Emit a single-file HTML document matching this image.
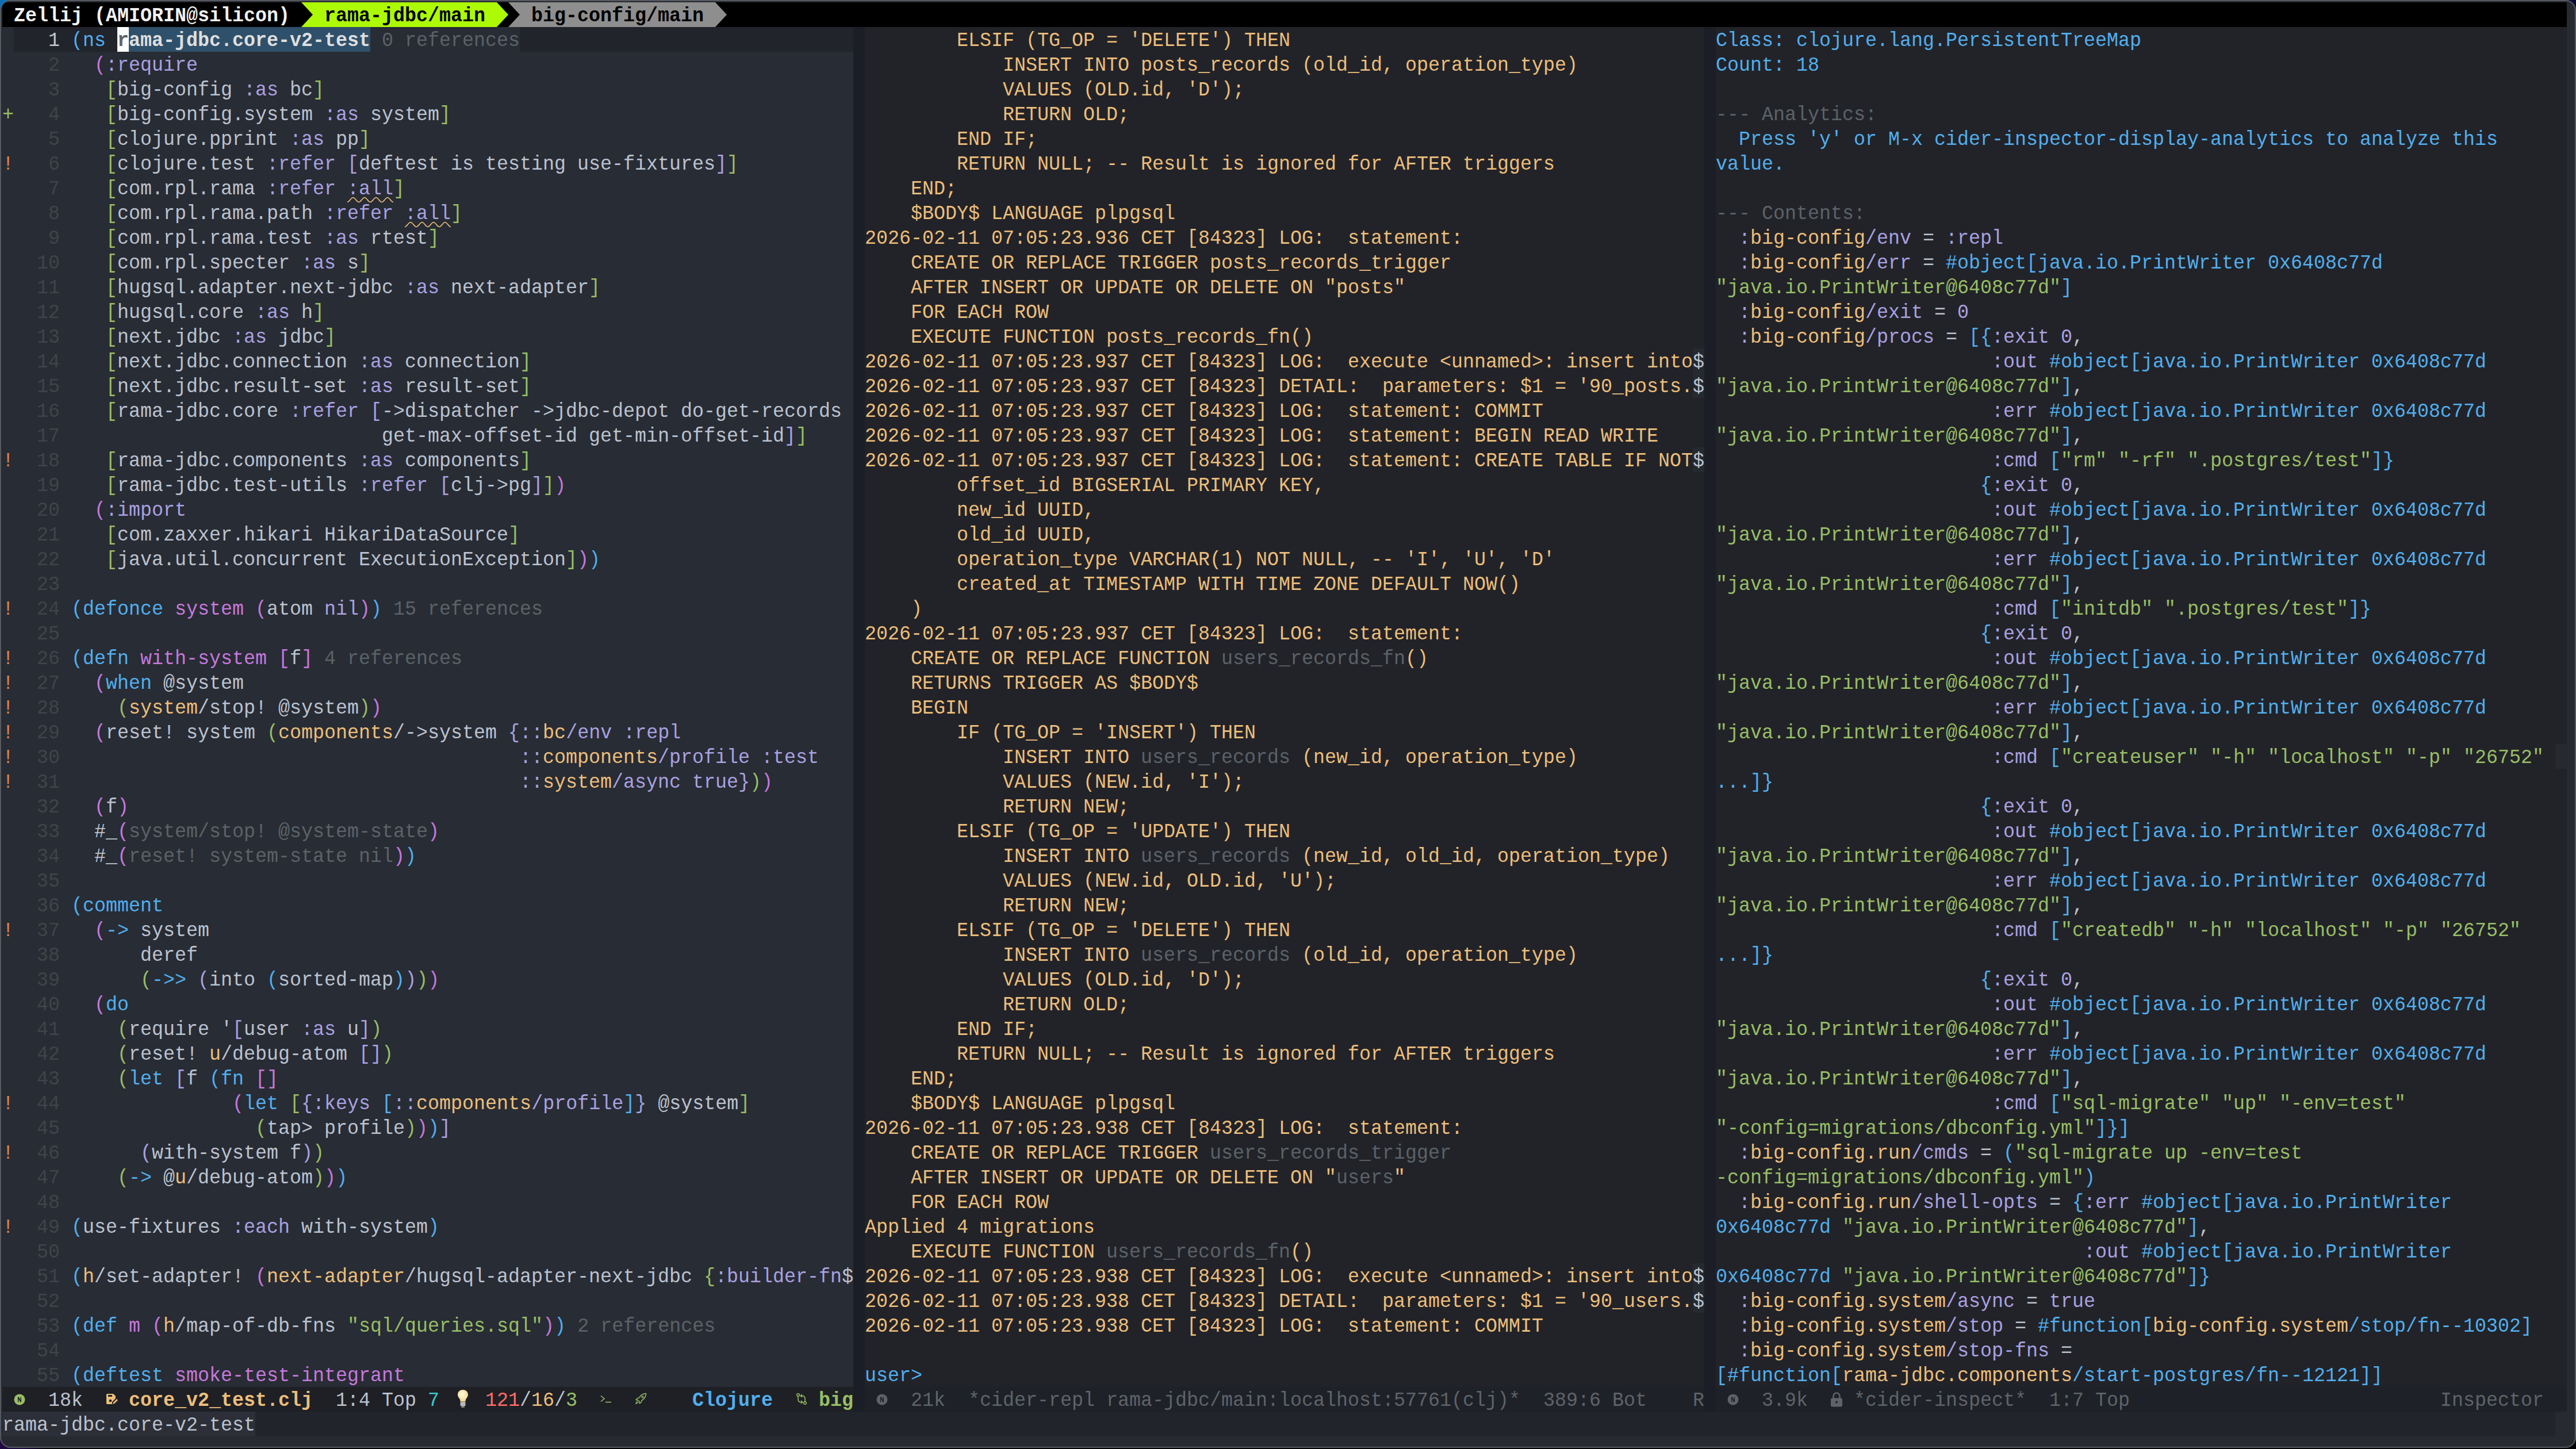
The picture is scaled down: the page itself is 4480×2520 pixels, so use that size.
<!DOCTYPE html>
<html><head><meta charset="utf-8"><title>Emacs</title><style>
html,body{margin:0;padding:0;width:4480px;height:2520px;overflow:hidden;background:#000;}
#scr{position:absolute;left:0;top:0;width:4480px;height:2520px;overflow:hidden;
  background:radial-gradient(circle at 0 0,#0a70bb 0,#0a70bb 30px,transparent 60px),radial-gradient(circle at 100% 0,#0b0a35 0,#0b0a35 40px,transparent 80px),radial-gradient(circle at 0 100%,#1c0a40 0,#1c0a40 40px,transparent 80px),#020205;}
#win{position:absolute;left:0;top:0;width:4476px;height:2514px;border:2px solid #56595f;border-radius:18px;background:#282a32;overflow:hidden;}
.q{position:absolute;}
.t{position:absolute;white-space:pre;font-family:"Liberation Mono",monospace;font-size:33.33px;line-height:43px;height:43px;transform:scaleY(1.078);transform-origin:0 30.4px;}
.b{font-weight:bold;}
</style></head>
<body><div id="scr"><div id="win">
<div style="position:absolute;left:-2px;top:-2px;width:4480px;height:2520px;">
<div class="q" style="left:4px;top:47px;width:1480px;height:2365px;background:#282c34;"></div><div class="q" style="left:24px;top:47px;width:1460px;height:43px;background:#21242b;"></div><div class="q" style="left:644px;top:47px;width:260px;height:43px;background:#282c34;"></div><div class="q" style="left:224px;top:47px;width:420px;height:43px;background:#2f506a;"></div><div class="q" style="left:204px;top:47px;width:20px;height:43px;background:#fcfcfc;"></div><div class="q" style="left:1484px;top:47px;width:20px;height:2408px;background:#1b1e26;"></div><div class="q" style="left:2964px;top:47px;width:20px;height:2408px;background:#1b1e26;"></div><div class="q" style="left:1504px;top:47px;width:1460px;height:2365px;background:#222328;"></div><div class="q" style="left:2984px;top:47px;width:1480px;height:2365px;background:#222328;"></div><div class="q" style="left:4px;top:2412px;width:1480px;height:43px;background:#1e2025;"></div><div class="q" style="left:1504px;top:2412px;width:1460px;height:43px;background:#1e2127;"></div><div class="q" style="left:2984px;top:2412px;width:1480px;height:43px;background:#1e2127;"></div><div class="q" style="left:4px;top:2455px;width:4440px;height:43px;background:#21242b;"></div><div class="q" style="left:4px;top:2455px;width:440px;height:43px;background:#2c2f37;"></div><div class="q" style="left:4px;top:4px;width:4460px;height:43px;background:#000000;"></div><div class="q" style="left:2944px;top:606px;width:20px;height:86px;background:#26292f;"></div><div class="q" style="left:2944px;top:2197px;width:20px;height:86px;background:#26292f;"></div><div class="q" style="left:2944px;top:778px;width:20px;height:43px;background:#26292f;"></div><div class="q" style="left:4444px;top:1294px;width:20px;height:43px;background:#27292f;"></div><div class="q" style="left:524px;top:4px;width:340px;height:43px;background:#adfa06;"></div><div class="q" style="left:884px;top:4px;width:360px;height:43px;background:#8e8e8e;"></div><div class="t b" style="left:24px;top:7px"><span style="color:#f0f0f0">Zellij (AMIORIN@silicon)</span></div><div class="t b" style="left:564px;top:7px"><span style="color:#000000">rama-jdbc/main</span></div><div class="t b" style="left:924px;top:7px"><span style="color:#000000">big-config/main</span></div><svg class="q" style="left:524px;top:4px" width="20" height="43" viewBox="0 0 20 43"><rect width="20" height="43" fill="#adfa06"/><path d="M0 0 L20 21.5 L0 43 Z" fill="#000000"/></svg><svg class="q" style="left:864px;top:4px" width="20" height="43" viewBox="0 0 20 43"><rect width="20" height="43" fill="#000000"/><path d="M0 0 L20 21.5 L0 43 Z" fill="#adfa06"/></svg><svg class="q" style="left:884px;top:4px" width="20" height="43" viewBox="0 0 20 43"><rect width="20" height="43" fill="#8e8e8e"/><path d="M0 0 L20 21.5 L0 43 Z" fill="#000000"/></svg><svg class="q" style="left:1244px;top:4px" width="20" height="43" viewBox="0 0 20 43"><rect width="20" height="43" fill="#000000"/><path d="M0 0 L20 21.5 L0 43 Z" fill="#8e8e8e"/></svg><div class="t" style="left:84px;top:50px"><span style="color:#c4c7cd">1</span></div><div class="t" style="left:124px;top:50px"><span style="color:#51afef">(ns </span><span style="color:#dfdfdf;font-weight:bold">rama-jdbc.core-v2-test</span><span style="color:#5b6268"> 0 references</span></div><div class="t" style="left:84px;top:93px"><span style="color:#3f444a">2</span></div><div class="t" style="left:124px;top:93px"><span style="color:#bbc2cf">  </span><span style="color:#c678dd">(</span><span style="color:#a9a1e1">:require</span></div><div class="t" style="left:84px;top:136px"><span style="color:#3f444a">3</span></div><div class="t" style="left:124px;top:136px"><span style="color:#bbc2cf">   </span><span style="color:#98be65">[</span><span style="color:#bbc2cf">big-config </span><span style="color:#a9a1e1">:as </span><span style="color:#bbc2cf">bc</span><span style="color:#98be65">]</span></div><div class="t" style="left:84px;top:179px"><span style="color:#3f444a">4</span></div><div class="t" style="left:124px;top:179px"><span style="color:#bbc2cf">   </span><span style="color:#98be65">[</span><span style="color:#bbc2cf">big-config.system </span><span style="color:#a9a1e1">:as </span><span style="color:#bbc2cf">system</span><span style="color:#98be65">]</span></div><div class="t" style="left:4px;top:179px"><span style="color:#98be65">+</span></div><div class="t" style="left:84px;top:222px"><span style="color:#3f444a">5</span></div><div class="t" style="left:124px;top:222px"><span style="color:#bbc2cf">   </span><span style="color:#98be65">[</span><span style="color:#bbc2cf">clojure.pprint </span><span style="color:#a9a1e1">:as </span><span style="color:#bbc2cf">pp</span><span style="color:#98be65">]</span></div><div class="t" style="left:84px;top:265px"><span style="color:#3f444a">6</span></div><div class="t" style="left:124px;top:265px"><span style="color:#bbc2cf">   </span><span style="color:#98be65">[</span><span style="color:#bbc2cf">clojure.test </span><span style="color:#a9a1e1">:refer </span><span style="color:#a9a1e1">[</span><span style="color:#bbc2cf">deftest is testing use-fixtures</span><span style="color:#a9a1e1">]</span><span style="color:#98be65">]</span></div><div class="t" style="left:4px;top:265px"><span style="color:#da8548">!</span></div><div class="t" style="left:84px;top:308px"><span style="color:#3f444a">7</span></div><div class="t" style="left:124px;top:308px"><span style="color:#bbc2cf">   </span><span style="color:#98be65">[</span><span style="color:#bbc2cf">com.rpl.rama </span><span style="color:#a9a1e1">:refer :all</span><span style="color:#98be65">]</span></div><div class="t" style="left:84px;top:351px"><span style="color:#3f444a">8</span></div><div class="t" style="left:124px;top:351px"><span style="color:#bbc2cf">   </span><span style="color:#98be65">[</span><span style="color:#bbc2cf">com.rpl.rama.path </span><span style="color:#a9a1e1">:refer :all</span><span style="color:#98be65">]</span></div><div class="t" style="left:84px;top:394px"><span style="color:#3f444a">9</span></div><div class="t" style="left:124px;top:394px"><span style="color:#bbc2cf">   </span><span style="color:#98be65">[</span><span style="color:#bbc2cf">com.rpl.rama.test </span><span style="color:#a9a1e1">:as </span><span style="color:#bbc2cf">rtest</span><span style="color:#98be65">]</span></div><div class="t" style="left:64px;top:437px"><span style="color:#3f444a">10</span></div><div class="t" style="left:124px;top:437px"><span style="color:#bbc2cf">   </span><span style="color:#98be65">[</span><span style="color:#bbc2cf">com.rpl.specter </span><span style="color:#a9a1e1">:as </span><span style="color:#bbc2cf">s</span><span style="color:#98be65">]</span></div><div class="t" style="left:64px;top:480px"><span style="color:#3f444a">11</span></div><div class="t" style="left:124px;top:480px"><span style="color:#bbc2cf">   </span><span style="color:#98be65">[</span><span style="color:#bbc2cf">hugsql.adapter.next-jdbc </span><span style="color:#a9a1e1">:as </span><span style="color:#bbc2cf">next-adapter</span><span style="color:#98be65">]</span></div><div class="t" style="left:64px;top:523px"><span style="color:#3f444a">12</span></div><div class="t" style="left:124px;top:523px"><span style="color:#bbc2cf">   </span><span style="color:#98be65">[</span><span style="color:#bbc2cf">hugsql.core </span><span style="color:#a9a1e1">:as </span><span style="color:#bbc2cf">h</span><span style="color:#98be65">]</span></div><div class="t" style="left:64px;top:566px"><span style="color:#3f444a">13</span></div><div class="t" style="left:124px;top:566px"><span style="color:#bbc2cf">   </span><span style="color:#98be65">[</span><span style="color:#bbc2cf">next.jdbc </span><span style="color:#a9a1e1">:as </span><span style="color:#bbc2cf">jdbc</span><span style="color:#98be65">]</span></div><div class="t" style="left:64px;top:609px"><span style="color:#3f444a">14</span></div><div class="t" style="left:124px;top:609px"><span style="color:#bbc2cf">   </span><span style="color:#98be65">[</span><span style="color:#bbc2cf">next.jdbc.connection </span><span style="color:#a9a1e1">:as </span><span style="color:#bbc2cf">connection</span><span style="color:#98be65">]</span></div><div class="t" style="left:64px;top:652px"><span style="color:#3f444a">15</span></div><div class="t" style="left:124px;top:652px"><span style="color:#bbc2cf">   </span><span style="color:#98be65">[</span><span style="color:#bbc2cf">next.jdbc.result-set </span><span style="color:#a9a1e1">:as </span><span style="color:#bbc2cf">result-set</span><span style="color:#98be65">]</span></div><div class="t" style="left:64px;top:695px"><span style="color:#3f444a">16</span></div><div class="t" style="left:124px;top:695px"><span style="color:#bbc2cf">   </span><span style="color:#98be65">[</span><span style="color:#bbc2cf">rama-jdbc.core </span><span style="color:#a9a1e1">:refer </span><span style="color:#a9a1e1">[</span><span style="color:#bbc2cf">-&gt;dispatcher -&gt;jdbc-depot do-get-records</span></div><div class="t" style="left:64px;top:738px"><span style="color:#3f444a">17</span></div><div class="t" style="left:124px;top:738px"><span style="color:#bbc2cf">                           </span><span style="color:#bbc2cf">get-max-offset-id get-min-offset-id</span><span style="color:#a9a1e1">]</span><span style="color:#98be65">]</span></div><div class="t" style="left:64px;top:781px"><span style="color:#3f444a">18</span></div><div class="t" style="left:124px;top:781px"><span style="color:#bbc2cf">   </span><span style="color:#98be65">[</span><span style="color:#bbc2cf">rama-jdbc.components </span><span style="color:#a9a1e1">:as </span><span style="color:#bbc2cf">components</span><span style="color:#98be65">]</span></div><div class="t" style="left:4px;top:781px"><span style="color:#da8548">!</span></div><div class="t" style="left:64px;top:824px"><span style="color:#3f444a">19</span></div><div class="t" style="left:124px;top:824px"><span style="color:#bbc2cf">   </span><span style="color:#98be65">[</span><span style="color:#bbc2cf">rama-jdbc.test-utils </span><span style="color:#a9a1e1">:refer </span><span style="color:#a9a1e1">[</span><span style="color:#bbc2cf">clj-&gt;pg</span><span style="color:#a9a1e1">]</span><span style="color:#98be65">]</span><span style="color:#c678dd">)</span></div><div class="t" style="left:64px;top:867px"><span style="color:#3f444a">20</span></div><div class="t" style="left:124px;top:867px"><span style="color:#bbc2cf">  </span><span style="color:#c678dd">(</span><span style="color:#a9a1e1">:import</span></div><div class="t" style="left:64px;top:910px"><span style="color:#3f444a">21</span></div><div class="t" style="left:124px;top:910px"><span style="color:#bbc2cf">   </span><span style="color:#98be65">[</span><span style="color:#bbc2cf">com.zaxxer.hikari HikariDataSource</span><span style="color:#98be65">]</span></div><div class="t" style="left:64px;top:953px"><span style="color:#3f444a">22</span></div><div class="t" style="left:124px;top:953px"><span style="color:#bbc2cf">   </span><span style="color:#98be65">[</span><span style="color:#bbc2cf">java.util.concurrent ExecutionException</span><span style="color:#98be65">]</span><span style="color:#c678dd">)</span><span style="color:#51afef">)</span></div><div class="t" style="left:64px;top:996px"><span style="color:#3f444a">23</span></div><div class="t" style="left:64px;top:1039px"><span style="color:#3f444a">24</span></div><div class="t" style="left:124px;top:1039px"><span style="color:#51afef">(defonce </span><span style="color:#c678dd">system </span><span style="color:#c678dd">(</span><span style="color:#bbc2cf">atom </span><span style="color:#a9a1e1">nil</span><span style="color:#c678dd">)</span><span style="color:#51afef">)</span><span style="color:#5b6268"> 15 references</span></div><div class="t" style="left:4px;top:1039px"><span style="color:#da8548">!</span></div><div class="t" style="left:64px;top:1082px"><span style="color:#3f444a">25</span></div><div class="t" style="left:64px;top:1125px"><span style="color:#3f444a">26</span></div><div class="t" style="left:124px;top:1125px"><span style="color:#51afef">(defn </span><span style="color:#c678dd">with-system </span><span style="color:#c678dd">[</span><span style="color:#bbc2cf">f</span><span style="color:#c678dd">]</span><span style="color:#5b6268"> 4 references</span></div><div class="t" style="left:4px;top:1125px"><span style="color:#da8548">!</span></div><div class="t" style="left:64px;top:1168px"><span style="color:#3f444a">27</span></div><div class="t" style="left:124px;top:1168px"><span style="color:#bbc2cf">  </span><span style="color:#c678dd">(</span><span style="color:#51afef">when </span><span style="color:#bbc2cf">@system</span></div><div class="t" style="left:4px;top:1168px"><span style="color:#da8548">!</span></div><div class="t" style="left:64px;top:1211px"><span style="color:#3f444a">28</span></div><div class="t" style="left:124px;top:1211px"><span style="color:#bbc2cf">    </span><span style="color:#98be65">(</span><span style="color:#ecbe7b">system</span><span style="color:#bbc2cf">/stop! @system</span><span style="color:#98be65">)</span><span style="color:#c678dd">)</span></div><div class="t" style="left:4px;top:1211px"><span style="color:#da8548">!</span></div><div class="t" style="left:64px;top:1254px"><span style="color:#3f444a">29</span></div><div class="t" style="left:124px;top:1254px"><span style="color:#bbc2cf">  </span><span style="color:#c678dd">(</span><span style="color:#bbc2cf">reset! system </span><span style="color:#98be65">(</span><span style="color:#ecbe7b">components</span><span style="color:#bbc2cf">/-&gt;system </span><span style="color:#a9a1e1">{::</span><span style="color:#ecbe7b">bc</span><span style="color:#a9a1e1">/env :repl</span></div><div class="t" style="left:4px;top:1254px"><span style="color:#da8548">!</span></div><div class="t" style="left:64px;top:1297px"><span style="color:#3f444a">30</span></div><div class="t" style="left:124px;top:1297px"><span style="color:#bbc2cf">                                       </span><span style="color:#a9a1e1">::</span><span style="color:#ecbe7b">components</span><span style="color:#a9a1e1">/profile :test</span></div><div class="t" style="left:4px;top:1297px"><span style="color:#da8548">!</span></div><div class="t" style="left:64px;top:1340px"><span style="color:#3f444a">31</span></div><div class="t" style="left:124px;top:1340px"><span style="color:#bbc2cf">                                       </span><span style="color:#a9a1e1">::</span><span style="color:#ecbe7b">system</span><span style="color:#a9a1e1">/async true}</span><span style="color:#98be65">)</span><span style="color:#c678dd">)</span></div><div class="t" style="left:4px;top:1340px"><span style="color:#da8548">!</span></div><div class="t" style="left:64px;top:1383px"><span style="color:#3f444a">32</span></div><div class="t" style="left:124px;top:1383px"><span style="color:#bbc2cf">  </span><span style="color:#c678dd">(</span><span style="color:#bbc2cf">f</span><span style="color:#c678dd">)</span></div><div class="t" style="left:64px;top:1426px"><span style="color:#3f444a">33</span></div><div class="t" style="left:124px;top:1426px"><span style="color:#bbc2cf">  </span><span style="color:#bbc2cf">#_</span><span style="color:#c678dd">(</span><span style="color:#5b6268">system/stop! @system-state</span><span style="color:#c678dd">)</span></div><div class="t" style="left:64px;top:1469px"><span style="color:#3f444a">34</span></div><div class="t" style="left:124px;top:1469px"><span style="color:#bbc2cf">  </span><span style="color:#bbc2cf">#_</span><span style="color:#c678dd">(</span><span style="color:#5b6268">reset! system-state nil</span><span style="color:#c678dd">)</span><span style="color:#51afef">)</span></div><div class="t" style="left:64px;top:1512px"><span style="color:#3f444a">35</span></div><div class="t" style="left:64px;top:1555px"><span style="color:#3f444a">36</span></div><div class="t" style="left:124px;top:1555px"><span style="color:#51afef">(comment</span></div><div class="t" style="left:64px;top:1598px"><span style="color:#3f444a">37</span></div><div class="t" style="left:124px;top:1598px"><span style="color:#bbc2cf">  </span><span style="color:#c678dd">(</span><span style="color:#51afef">-&gt; </span><span style="color:#bbc2cf">system</span></div><div class="t" style="left:4px;top:1598px"><span style="color:#da8548">!</span></div><div class="t" style="left:64px;top:1641px"><span style="color:#3f444a">38</span></div><div class="t" style="left:124px;top:1641px"><span style="color:#bbc2cf">      </span><span style="color:#bbc2cf">deref</span></div><div class="t" style="left:64px;top:1684px"><span style="color:#3f444a">39</span></div><div class="t" style="left:124px;top:1684px"><span style="color:#bbc2cf">      </span><span style="color:#98be65">(</span><span style="color:#51afef">-&gt;&gt; </span><span style="color:#a9a1e1">(</span><span style="color:#bbc2cf">into </span><span style="color:#51afef">(</span><span style="color:#bbc2cf">sorted-map</span><span style="color:#51afef">)</span><span style="color:#a9a1e1">)</span><span style="color:#98be65">)</span><span style="color:#c678dd">)</span></div><div class="t" style="left:64px;top:1727px"><span style="color:#3f444a">40</span></div><div class="t" style="left:124px;top:1727px"><span style="color:#bbc2cf">  </span><span style="color:#c678dd">(</span><span style="color:#51afef">do</span></div><div class="t" style="left:64px;top:1770px"><span style="color:#3f444a">41</span></div><div class="t" style="left:124px;top:1770px"><span style="color:#bbc2cf">    </span><span style="color:#98be65">(</span><span style="color:#bbc2cf">require &#x27;</span><span style="color:#a9a1e1">[</span><span style="color:#bbc2cf">user </span><span style="color:#a9a1e1">:as </span><span style="color:#bbc2cf">u</span><span style="color:#a9a1e1">]</span><span style="color:#98be65">)</span></div><div class="t" style="left:64px;top:1813px"><span style="color:#3f444a">42</span></div><div class="t" style="left:124px;top:1813px"><span style="color:#bbc2cf">    </span><span style="color:#98be65">(</span><span style="color:#bbc2cf">reset! </span><span style="color:#ecbe7b">u</span><span style="color:#bbc2cf">/debug-atom </span><span style="color:#a9a1e1">[]</span><span style="color:#98be65">)</span></div><div class="t" style="left:64px;top:1856px"><span style="color:#3f444a">43</span></div><div class="t" style="left:124px;top:1856px"><span style="color:#bbc2cf">    </span><span style="color:#98be65">(</span><span style="color:#51afef">let </span><span style="color:#a9a1e1">[</span><span style="color:#bbc2cf">f </span><span style="color:#51afef">(fn </span><span style="color:#c678dd">[]</span></div><div class="t" style="left:64px;top:1899px"><span style="color:#3f444a">44</span></div><div class="t" style="left:124px;top:1899px"><span style="color:#bbc2cf">              </span><span style="color:#c678dd">(</span><span style="color:#51afef">let </span><span style="color:#98be65">[</span><span style="color:#a9a1e1">{:keys </span><span style="color:#51afef">[</span><span style="color:#a9a1e1">::</span><span style="color:#ecbe7b">components</span><span style="color:#a9a1e1">/profile</span><span style="color:#51afef">]</span><span style="color:#a9a1e1">} </span><span style="color:#bbc2cf">@system</span><span style="color:#98be65">]</span></div><div class="t" style="left:4px;top:1899px"><span style="color:#da8548">!</span></div><div class="t" style="left:64px;top:1942px"><span style="color:#3f444a">45</span></div><div class="t" style="left:124px;top:1942px"><span style="color:#bbc2cf">                </span><span style="color:#98be65">(</span><span style="color:#bbc2cf">tap&gt; profile</span><span style="color:#98be65">)</span><span style="color:#c678dd">)</span><span style="color:#51afef">)</span><span style="color:#a9a1e1">]</span></div><div class="t" style="left:64px;top:1985px"><span style="color:#3f444a">46</span></div><div class="t" style="left:124px;top:1985px"><span style="color:#bbc2cf">      </span><span style="color:#a9a1e1">(</span><span style="color:#bbc2cf">with-system f</span><span style="color:#a9a1e1">)</span><span style="color:#98be65">)</span></div><div class="t" style="left:4px;top:1985px"><span style="color:#da8548">!</span></div><div class="t" style="left:64px;top:2028px"><span style="color:#3f444a">47</span></div><div class="t" style="left:124px;top:2028px"><span style="color:#bbc2cf">    </span><span style="color:#98be65">(</span><span style="color:#51afef">-&gt; </span><span style="color:#bbc2cf">@</span><span style="color:#ecbe7b">u</span><span style="color:#bbc2cf">/debug-atom</span><span style="color:#98be65">)</span><span style="color:#c678dd">)</span><span style="color:#51afef">)</span></div><div class="t" style="left:64px;top:2071px"><span style="color:#3f444a">48</span></div><div class="t" style="left:64px;top:2114px"><span style="color:#3f444a">49</span></div><div class="t" style="left:124px;top:2114px"><span style="color:#51afef">(</span><span style="color:#bbc2cf">use-fixtures </span><span style="color:#a9a1e1">:each </span><span style="color:#bbc2cf">with-system</span><span style="color:#51afef">)</span></div><div class="t" style="left:4px;top:2114px"><span style="color:#da8548">!</span></div><div class="t" style="left:64px;top:2157px"><span style="color:#3f444a">50</span></div><div class="t" style="left:64px;top:2200px"><span style="color:#3f444a">51</span></div><div class="t" style="left:124px;top:2200px"><span style="color:#51afef">(</span><span style="color:#ecbe7b">h</span><span style="color:#bbc2cf">/set-adapter! </span><span style="color:#c678dd">(</span><span style="color:#ecbe7b">next-adapter</span><span style="color:#bbc2cf">/hugsql-adapter-next-jdbc </span><span style="color:#98be65">{</span><span style="color:#a9a1e1">:builder-fn</span><span style="color:#bbc2cf">$</span></div><div class="t" style="left:64px;top:2243px"><span style="color:#3f444a">52</span></div><div class="t" style="left:64px;top:2286px"><span style="color:#3f444a">53</span></div><div class="t" style="left:124px;top:2286px"><span style="color:#51afef">(def </span><span style="color:#c678dd">m </span><span style="color:#c678dd">(</span><span style="color:#ecbe7b">h</span><span style="color:#bbc2cf">/map-of-db-fns </span><span style="color:#98be65">&quot;sql/queries.sql&quot;</span><span style="color:#c678dd">)</span><span style="color:#51afef">)</span><span style="color:#5b6268"> 2 references</span></div><div class="t" style="left:64px;top:2329px"><span style="color:#3f444a">54</span></div><div class="t" style="left:64px;top:2372px"><span style="color:#3f444a">55</span></div><div class="t" style="left:124px;top:2372px"><span style="color:#51afef">(deftest </span><span style="color:#c678dd">smoke-test-integrant</span></div><div class="t" style="left:204px;top:50px"><span style="color:#5f6268;font-weight:bold">r</span></div><svg class="q" style="left:604px;top:342px;overflow:visible" width="80" height="11" viewBox="0 0 80 11"><path d="M0 9.5 C3.5 9.5 6.5 1.5 10 1.5 C13.5 1.5 16.5 9.5 20 9.5 C23.5 9.5 26.5 1.5 30 1.5 C33.5 1.5 36.5 9.5 40 9.5 C43.5 9.5 46.5 1.5 50 1.5 C53.5 1.5 56.5 9.5 60 9.5 C63.5 9.5 66.5 1.5 70 1.5 C73.5 1.5 76.5 9.5 80 9.5" fill="none" stroke="#ecbe7b" stroke-width="1.7"/></svg><svg class="q" style="left:704px;top:385px;overflow:visible" width="80" height="11" viewBox="0 0 80 11"><path d="M0 9.5 C3.5 9.5 6.5 1.5 10 1.5 C13.5 1.5 16.5 9.5 20 9.5 C23.5 9.5 26.5 1.5 30 1.5 C33.5 1.5 36.5 9.5 40 9.5 C43.5 9.5 46.5 1.5 50 1.5 C53.5 1.5 56.5 9.5 60 9.5 C63.5 9.5 66.5 1.5 70 1.5 C73.5 1.5 76.5 9.5 80 9.5" fill="none" stroke="#ecbe7b" stroke-width="1.7"/></svg><div class="t" style="left:1504px;top:50px"><span style="color:#ecbe7b">        ELSIF (TG_OP = &#x27;DELETE&#x27;) THEN</span></div><div class="t" style="left:1504px;top:93px"><span style="color:#ecbe7b">            INSERT INTO posts_records (old_id, operation_type)</span></div><div class="t" style="left:1504px;top:136px"><span style="color:#ecbe7b">            VALUES (OLD.id, &#x27;D&#x27;);</span></div><div class="t" style="left:1504px;top:179px"><span style="color:#ecbe7b">            RETURN OLD;</span></div><div class="t" style="left:1504px;top:222px"><span style="color:#ecbe7b">        END IF;</span></div><div class="t" style="left:1504px;top:265px"><span style="color:#ecbe7b">        RETURN NULL; -- Result is ignored for AFTER triggers</span></div><div class="t" style="left:1504px;top:308px"><span style="color:#ecbe7b">    END;</span></div><div class="t" style="left:1504px;top:351px"><span style="color:#ecbe7b">    $BODY$ LANGUAGE plpgsql</span></div><div class="t" style="left:1504px;top:394px"><span style="color:#ecbe7b">2026-02-11 07:05:23.936 CET [84323] LOG:  statement:</span></div><div class="t" style="left:1504px;top:437px"><span style="color:#ecbe7b">    CREATE OR REPLACE TRIGGER posts_records_trigger</span></div><div class="t" style="left:1504px;top:480px"><span style="color:#ecbe7b">    AFTER INSERT OR UPDATE OR DELETE ON &quot;posts&quot;</span></div><div class="t" style="left:1504px;top:523px"><span style="color:#ecbe7b">    FOR EACH ROW</span></div><div class="t" style="left:1504px;top:566px"><span style="color:#ecbe7b">    EXECUTE FUNCTION posts_records_fn()</span></div><div class="t" style="left:1504px;top:609px"><span style="color:#ecbe7b">2026-02-11 07:05:23.937 CET [84323] LOG:  execute &lt;unnamed&gt;: insert into</span><span style="color:#bbc2cf">$</span></div><div class="t" style="left:1504px;top:652px"><span style="color:#ecbe7b">2026-02-11 07:05:23.937 CET [84323] DETAIL:  parameters: $1 = &#x27;90_posts.</span><span style="color:#bbc2cf">$</span></div><div class="t" style="left:1504px;top:695px"><span style="color:#ecbe7b">2026-02-11 07:05:23.937 CET [84323] LOG:  statement: COMMIT</span></div><div class="t" style="left:1504px;top:738px"><span style="color:#ecbe7b">2026-02-11 07:05:23.937 CET [84323] LOG:  statement: BEGIN READ WRITE</span></div><div class="t" style="left:1504px;top:781px"><span style="color:#ecbe7b">2026-02-11 07:05:23.937 CET [84323] LOG:  statement: CREATE TABLE IF NOT</span><span style="color:#bbc2cf">$</span></div><div class="t" style="left:1504px;top:824px"><span style="color:#ecbe7b">        offset_id BIGSERIAL PRIMARY KEY,</span></div><div class="t" style="left:1504px;top:867px"><span style="color:#ecbe7b">        new_id UUID,</span></div><div class="t" style="left:1504px;top:910px"><span style="color:#ecbe7b">        old_id UUID,</span></div><div class="t" style="left:1504px;top:953px"><span style="color:#ecbe7b">        operation_type VARCHAR(1) NOT NULL, -- &#x27;I&#x27;, &#x27;U&#x27;, &#x27;D&#x27;</span></div><div class="t" style="left:1504px;top:996px"><span style="color:#ecbe7b">        created_at TIMESTAMP WITH TIME ZONE DEFAULT NOW()</span></div><div class="t" style="left:1504px;top:1039px"><span style="color:#ecbe7b">    )</span></div><div class="t" style="left:1504px;top:1082px"><span style="color:#ecbe7b">2026-02-11 07:05:23.937 CET [84323] LOG:  statement:</span></div><div class="t" style="left:1504px;top:1125px"><span style="color:#ecbe7b">    CREATE OR REPLACE FUNCTION </span><span style="color:#5b6268">users_records_fn</span><span style="color:#ecbe7b">()</span></div><div class="t" style="left:1504px;top:1168px"><span style="color:#ecbe7b">    RETURNS TRIGGER AS $BODY$</span></div><div class="t" style="left:1504px;top:1211px"><span style="color:#ecbe7b">    BEGIN</span></div><div class="t" style="left:1504px;top:1254px"><span style="color:#ecbe7b">        IF (TG_OP = &#x27;INSERT&#x27;) THEN</span></div><div class="t" style="left:1504px;top:1297px"><span style="color:#ecbe7b">            INSERT INTO </span><span style="color:#5b6268">users_records</span><span style="color:#ecbe7b"> (new_id, operation_type)</span></div><div class="t" style="left:1504px;top:1340px"><span style="color:#ecbe7b">            VALUES (NEW.id, &#x27;I&#x27;);</span></div><div class="t" style="left:1504px;top:1383px"><span style="color:#ecbe7b">            RETURN NEW;</span></div><div class="t" style="left:1504px;top:1426px"><span style="color:#ecbe7b">        ELSIF (TG_OP = &#x27;UPDATE&#x27;) THEN</span></div><div class="t" style="left:1504px;top:1469px"><span style="color:#ecbe7b">            INSERT INTO </span><span style="color:#5b6268">users_records</span><span style="color:#ecbe7b"> (new_id, old_id, operation_type)</span></div><div class="t" style="left:1504px;top:1512px"><span style="color:#ecbe7b">            VALUES (NEW.id, OLD.id, &#x27;U&#x27;);</span></div><div class="t" style="left:1504px;top:1555px"><span style="color:#ecbe7b">            RETURN NEW;</span></div><div class="t" style="left:1504px;top:1598px"><span style="color:#ecbe7b">        ELSIF (TG_OP = &#x27;DELETE&#x27;) THEN</span></div><div class="t" style="left:1504px;top:1641px"><span style="color:#ecbe7b">            INSERT INTO </span><span style="color:#5b6268">users_records</span><span style="color:#ecbe7b"> (old_id, operation_type)</span></div><div class="t" style="left:1504px;top:1684px"><span style="color:#ecbe7b">            VALUES (OLD.id, &#x27;D&#x27;);</span></div><div class="t" style="left:1504px;top:1727px"><span style="color:#ecbe7b">            RETURN OLD;</span></div><div class="t" style="left:1504px;top:1770px"><span style="color:#ecbe7b">        END IF;</span></div><div class="t" style="left:1504px;top:1813px"><span style="color:#ecbe7b">        RETURN NULL; -- Result is ignored for AFTER triggers</span></div><div class="t" style="left:1504px;top:1856px"><span style="color:#ecbe7b">    END;</span></div><div class="t" style="left:1504px;top:1899px"><span style="color:#ecbe7b">    $BODY$ LANGUAGE plpgsql</span></div><div class="t" style="left:1504px;top:1942px"><span style="color:#ecbe7b">2026-02-11 07:05:23.938 CET [84323] LOG:  statement:</span></div><div class="t" style="left:1504px;top:1985px"><span style="color:#ecbe7b">    CREATE OR REPLACE TRIGGER </span><span style="color:#5b6268">users_records_trigger</span></div><div class="t" style="left:1504px;top:2028px"><span style="color:#ecbe7b">    AFTER INSERT OR UPDATE OR DELETE ON &quot;</span><span style="color:#5b6268">users</span><span style="color:#ecbe7b">&quot;</span></div><div class="t" style="left:1504px;top:2071px"><span style="color:#ecbe7b">    FOR EACH ROW</span></div><div class="t" style="left:1504px;top:2114px"><span style="color:#ecbe7b">Applied 4 migrations</span></div><div class="t" style="left:1504px;top:2157px"><span style="color:#ecbe7b">    EXECUTE FUNCTION </span><span style="color:#5b6268">users_records_fn</span><span style="color:#ecbe7b">()</span></div><div class="t" style="left:1504px;top:2200px"><span style="color:#ecbe7b">2026-02-11 07:05:23.938 CET [84323] LOG:  execute &lt;unnamed&gt;: insert into</span><span style="color:#bbc2cf">$</span></div><div class="t" style="left:1504px;top:2243px"><span style="color:#ecbe7b">2026-02-11 07:05:23.938 CET [84323] DETAIL:  parameters: $1 = &#x27;90_users.</span><span style="color:#bbc2cf">$</span></div><div class="t" style="left:1504px;top:2286px"><span style="color:#ecbe7b">2026-02-11 07:05:23.938 CET [84323] LOG:  statement: COMMIT</span></div><div class="t" style="left:1504px;top:2372px"><span style="color:#51afef">user&gt;</span></div><div class="t" style="left:2984px;top:50px"><span style="color:#51afef">Class: clojure.lang.PersistentTreeMap</span></div><div class="t" style="left:2984px;top:93px"><span style="color:#51afef">Count: 18</span></div><div class="t" style="left:2984px;top:179px"><span style="color:#5b6268">--- Analytics:</span></div><div class="t" style="left:2984px;top:222px"><span style="color:#51afef">  Press &#x27;y&#x27; or M-x cider-inspector-display-analytics to analyze this</span></div><div class="t" style="left:2984px;top:265px"><span style="color:#51afef">value.</span></div><div class="t" style="left:2984px;top:351px"><span style="color:#5b6268">--- Contents:</span></div><div class="t" style="left:2984px;top:394px"><span style="color:#bbc2cf">  </span><span style="color:#a9a1e1">:</span><span style="color:#ecbe7b">big-config</span><span style="color:#a9a1e1">/env </span><span style="color:#bbc2cf">= </span><span style="color:#a9a1e1">:repl</span></div><div class="t" style="left:2984px;top:437px"><span style="color:#bbc2cf">  </span><span style="color:#a9a1e1">:</span><span style="color:#ecbe7b">big-config</span><span style="color:#a9a1e1">/err </span><span style="color:#bbc2cf">= </span><span style="color:#51afef">#object[java.io.PrintWriter 0x6408c77d</span></div><div class="t" style="left:2984px;top:480px"><span style="color:#98be65">&quot;java.io.PrintWriter@6408c77d&quot;</span><span style="color:#51afef">]</span></div><div class="t" style="left:2984px;top:523px"><span style="color:#bbc2cf">  </span><span style="color:#a9a1e1">:</span><span style="color:#ecbe7b">big-config</span><span style="color:#a9a1e1">/exit </span><span style="color:#bbc2cf">= </span><span style="color:#a9a1e1">0</span></div><div class="t" style="left:2984px;top:566px"><span style="color:#bbc2cf">  </span><span style="color:#a9a1e1">:</span><span style="color:#ecbe7b">big-config</span><span style="color:#a9a1e1">/procs </span><span style="color:#bbc2cf">= </span><span style="color:#51afef">[{</span><span style="color:#a9a1e1">:exit 0</span><span style="color:#bbc2cf">,</span></div><div class="t" style="left:2984px;top:609px"><span style="color:#bbc2cf">                        </span><span style="color:#a9a1e1">:out </span><span style="color:#51afef">#object[java.io.PrintWriter 0x6408c77d</span></div><div class="t" style="left:2984px;top:652px"><span style="color:#98be65">&quot;java.io.PrintWriter@6408c77d&quot;</span><span style="color:#51afef">]</span><span style="color:#bbc2cf">,</span></div><div class="t" style="left:2984px;top:695px"><span style="color:#bbc2cf">                        </span><span style="color:#a9a1e1">:err </span><span style="color:#51afef">#object[java.io.PrintWriter 0x6408c77d</span></div><div class="t" style="left:2984px;top:738px"><span style="color:#98be65">&quot;java.io.PrintWriter@6408c77d&quot;</span><span style="color:#51afef">]</span><span style="color:#bbc2cf">,</span></div><div class="t" style="left:2984px;top:781px"><span style="color:#bbc2cf">                        </span><span style="color:#a9a1e1">:cmd </span><span style="color:#51afef">[</span><span style="color:#98be65">&quot;rm&quot; &quot;-rf&quot; &quot;.postgres/test&quot;</span><span style="color:#51afef">]}</span></div><div class="t" style="left:2984px;top:824px"><span style="color:#bbc2cf">                       </span><span style="color:#51afef">{</span><span style="color:#a9a1e1">:exit 0</span><span style="color:#bbc2cf">,</span></div><div class="t" style="left:2984px;top:867px"><span style="color:#bbc2cf">                        </span><span style="color:#a9a1e1">:out </span><span style="color:#51afef">#object[java.io.PrintWriter 0x6408c77d</span></div><div class="t" style="left:2984px;top:910px"><span style="color:#98be65">&quot;java.io.PrintWriter@6408c77d&quot;</span><span style="color:#51afef">]</span><span style="color:#bbc2cf">,</span></div><div class="t" style="left:2984px;top:953px"><span style="color:#bbc2cf">                        </span><span style="color:#a9a1e1">:err </span><span style="color:#51afef">#object[java.io.PrintWriter 0x6408c77d</span></div><div class="t" style="left:2984px;top:996px"><span style="color:#98be65">&quot;java.io.PrintWriter@6408c77d&quot;</span><span style="color:#51afef">]</span><span style="color:#bbc2cf">,</span></div><div class="t" style="left:2984px;top:1039px"><span style="color:#bbc2cf">                        </span><span style="color:#a9a1e1">:cmd </span><span style="color:#51afef">[</span><span style="color:#98be65">&quot;initdb&quot; &quot;.postgres/test&quot;</span><span style="color:#51afef">]}</span></div><div class="t" style="left:2984px;top:1082px"><span style="color:#bbc2cf">                       </span><span style="color:#51afef">{</span><span style="color:#a9a1e1">:exit 0</span><span style="color:#bbc2cf">,</span></div><div class="t" style="left:2984px;top:1125px"><span style="color:#bbc2cf">                        </span><span style="color:#a9a1e1">:out </span><span style="color:#51afef">#object[java.io.PrintWriter 0x6408c77d</span></div><div class="t" style="left:2984px;top:1168px"><span style="color:#98be65">&quot;java.io.PrintWriter@6408c77d&quot;</span><span style="color:#51afef">]</span><span style="color:#bbc2cf">,</span></div><div class="t" style="left:2984px;top:1211px"><span style="color:#bbc2cf">                        </span><span style="color:#a9a1e1">:err </span><span style="color:#51afef">#object[java.io.PrintWriter 0x6408c77d</span></div><div class="t" style="left:2984px;top:1254px"><span style="color:#98be65">&quot;java.io.PrintWriter@6408c77d&quot;</span><span style="color:#51afef">]</span><span style="color:#bbc2cf">,</span></div><div class="t" style="left:2984px;top:1297px"><span style="color:#bbc2cf">                        </span><span style="color:#a9a1e1">:cmd </span><span style="color:#51afef">[</span><span style="color:#98be65">&quot;createuser&quot; &quot;-h&quot; &quot;localhost&quot; &quot;-p&quot; &quot;26752&quot;</span></div><div class="t" style="left:2984px;top:1340px"><span style="color:#51afef">...]}</span></div><div class="t" style="left:2984px;top:1383px"><span style="color:#bbc2cf">                       </span><span style="color:#51afef">{</span><span style="color:#a9a1e1">:exit 0</span><span style="color:#bbc2cf">,</span></div><div class="t" style="left:2984px;top:1426px"><span style="color:#bbc2cf">                        </span><span style="color:#a9a1e1">:out </span><span style="color:#51afef">#object[java.io.PrintWriter 0x6408c77d</span></div><div class="t" style="left:2984px;top:1469px"><span style="color:#98be65">&quot;java.io.PrintWriter@6408c77d&quot;</span><span style="color:#51afef">]</span><span style="color:#bbc2cf">,</span></div><div class="t" style="left:2984px;top:1512px"><span style="color:#bbc2cf">                        </span><span style="color:#a9a1e1">:err </span><span style="color:#51afef">#object[java.io.PrintWriter 0x6408c77d</span></div><div class="t" style="left:2984px;top:1555px"><span style="color:#98be65">&quot;java.io.PrintWriter@6408c77d&quot;</span><span style="color:#51afef">]</span><span style="color:#bbc2cf">,</span></div><div class="t" style="left:2984px;top:1598px"><span style="color:#bbc2cf">                        </span><span style="color:#a9a1e1">:cmd </span><span style="color:#51afef">[</span><span style="color:#98be65">&quot;createdb&quot; &quot;-h&quot; &quot;localhost&quot; &quot;-p&quot; &quot;26752&quot;</span></div><div class="t" style="left:2984px;top:1641px"><span style="color:#51afef">...]}</span></div><div class="t" style="left:2984px;top:1684px"><span style="color:#bbc2cf">                       </span><span style="color:#51afef">{</span><span style="color:#a9a1e1">:exit 0</span><span style="color:#bbc2cf">,</span></div><div class="t" style="left:2984px;top:1727px"><span style="color:#bbc2cf">                        </span><span style="color:#a9a1e1">:out </span><span style="color:#51afef">#object[java.io.PrintWriter 0x6408c77d</span></div><div class="t" style="left:2984px;top:1770px"><span style="color:#98be65">&quot;java.io.PrintWriter@6408c77d&quot;</span><span style="color:#51afef">]</span><span style="color:#bbc2cf">,</span></div><div class="t" style="left:2984px;top:1813px"><span style="color:#bbc2cf">                        </span><span style="color:#a9a1e1">:err </span><span style="color:#51afef">#object[java.io.PrintWriter 0x6408c77d</span></div><div class="t" style="left:2984px;top:1856px"><span style="color:#98be65">&quot;java.io.PrintWriter@6408c77d&quot;</span><span style="color:#51afef">]</span><span style="color:#bbc2cf">,</span></div><div class="t" style="left:2984px;top:1899px"><span style="color:#bbc2cf">                        </span><span style="color:#a9a1e1">:cmd </span><span style="color:#51afef">[</span><span style="color:#98be65">&quot;sql-migrate&quot; &quot;up&quot; &quot;-env=test&quot;</span></div><div class="t" style="left:2984px;top:1942px"><span style="color:#98be65">&quot;-config=migrations/dbconfig.yml&quot;</span><span style="color:#51afef">]}]</span></div><div class="t" style="left:2984px;top:1985px"><span style="color:#bbc2cf">  </span><span style="color:#a9a1e1">:</span><span style="color:#ecbe7b">big-config.run</span><span style="color:#a9a1e1">/cmds </span><span style="color:#bbc2cf">= </span><span style="color:#51afef">(</span><span style="color:#98be65">&quot;sql-migrate up -env=test</span></div><div class="t" style="left:2984px;top:2028px"><span style="color:#98be65">-config=migrations/dbconfig.yml&quot;</span><span style="color:#51afef">)</span></div><div class="t" style="left:2984px;top:2071px"><span style="color:#bbc2cf">  </span><span style="color:#a9a1e1">:</span><span style="color:#ecbe7b">big-config.run</span><span style="color:#a9a1e1">/shell-opts </span><span style="color:#bbc2cf">= </span><span style="color:#51afef">{</span><span style="color:#a9a1e1">:err </span><span style="color:#51afef">#object[java.io.PrintWriter</span></div><div class="t" style="left:2984px;top:2114px"><span style="color:#51afef">0x6408c77d </span><span style="color:#98be65">&quot;java.io.PrintWriter@6408c77d&quot;</span><span style="color:#51afef">]</span><span style="color:#bbc2cf">,</span></div><div class="t" style="left:2984px;top:2157px"><span style="color:#bbc2cf">                                </span><span style="color:#a9a1e1">:out </span><span style="color:#51afef">#object[java.io.PrintWriter</span></div><div class="t" style="left:2984px;top:2200px"><span style="color:#51afef">0x6408c77d </span><span style="color:#98be65">&quot;java.io.PrintWriter@6408c77d&quot;</span><span style="color:#51afef">]}</span></div><div class="t" style="left:2984px;top:2243px"><span style="color:#bbc2cf">  </span><span style="color:#a9a1e1">:</span><span style="color:#ecbe7b">big-config.system</span><span style="color:#a9a1e1">/async </span><span style="color:#bbc2cf">= </span><span style="color:#a9a1e1">true</span></div><div class="t" style="left:2984px;top:2286px"><span style="color:#bbc2cf">  </span><span style="color:#a9a1e1">:</span><span style="color:#ecbe7b">big-config.system</span><span style="color:#a9a1e1">/stop </span><span style="color:#bbc2cf">= </span><span style="color:#51afef">#function[</span><span style="color:#ecbe7b">big-config.system</span><span style="color:#51afef">/stop/fn--10302]</span></div><div class="t" style="left:2984px;top:2329px"><span style="color:#bbc2cf">  </span><span style="color:#a9a1e1">:</span><span style="color:#ecbe7b">big-config.system</span><span style="color:#a9a1e1">/stop-fns </span><span style="color:#bbc2cf">=</span></div><div class="t" style="left:2984px;top:2372px"><span style="color:#51afef">[#function[</span><span style="color:#ecbe7b">rama-jdbc.components</span><span style="color:#51afef">/start-postgres/fn--12121]]</span></div><div class="t" style="left:84px;top:2415px"><span style="color:#bbc2cf">18k</span></div><div class="t b" style="left:224px;top:2415px"><span style="color:#ecbe7b">core_v2_test.clj</span></div><div class="t" style="left:584px;top:2415px"><span style="color:#bbc2cf">1:4 Top </span><span style="color:#3cc8cf">7</span></div><div class="t" style="left:844px;top:2415px"><span style="color:#ff6c6b">121</span><span style="color:#bbc2cf">/</span><span style="color:#ecbe7b">16</span><span style="color:#bbc2cf">/</span><span style="color:#98be65">3</span></div><div class="t b" style="left:1204px;top:2415px"><span style="color:#51afef">Clojure</span></div><div class="t b" style="left:1424px;top:2415px"><span style="color:#98be65">big</span></div><div class="t" style="left:1584px;top:2415px"><span style="color:#5f6369">21k  *cider-repl rama-jdbc/main:localhost:57761(clj)*  389:6 Bot</span></div><div class="t" style="left:2944px;top:2415px"><span style="color:#5f6369">R</span></div><div class="t" style="left:3064px;top:2415px"><span style="color:#5f6369">3.9k</span></div><div class="t" style="left:3224px;top:2415px"><span style="color:#5f6369">*cider-inspect*  1:7 Top</span></div><div class="t" style="left:4244px;top:2415px"><span style="color:#5f6369">Inspector</span></div><div class="t" style="left:4px;top:2458px"><span style="color:#bbc2cf">rama-jdbc.core-v2-test</span></div><svg class="q" style="left:22px;top:2421.5px" width="24" height="24" viewBox="0 0 24 24"><circle cx="12" cy="12" r="9.5" fill="#98be65"/><path d="M9 16.5V7.5h1.6l3 5.6V7.5H15v9h-1.5l-3.1-5.7v5.7Z" fill="#1c1f24"/></svg><svg class="q" style="left:1522px;top:2421.5px" width="24" height="24" viewBox="0 0 24 24"><circle cx="12" cy="12" r="9.5" fill="#5f6369"/><path d="M9 16.5V7.5h1.6l3 5.6V7.5H15v9h-1.5l-3.1-5.7v5.7Z" fill="#1c1f24"/></svg><svg class="q" style="left:3002px;top:2421.5px" width="24" height="24" viewBox="0 0 24 24"><circle cx="12" cy="12" r="9.5" fill="#5f6369"/><path d="M9 16.5V7.5h1.6l3 5.6V7.5H15v9h-1.5l-3.1-5.7v5.7Z" fill="#1c1f24"/></svg><svg class="q" style="left:184px;top:2423px" width="21" height="21" viewBox="0 0 21 21"><path d="M1 2.5Q1 1 2.5 1H13l4 4v4l-6 6v4H2.5Q1 19 1 17.5Z" fill="#ecbe7b"/><rect x="4" y="3" width="7" height="3" fill="#1c1f24"/><circle cx="8" cy="13" r="2.3" fill="#1c1f24"/><path d="M11.5 19.5l1-3.5 6.5-6.5 2.5 2.5-6.5 6.5Z" fill="#ecbe7b" stroke="#1c1f24" stroke-width="1"/></svg><svg class="q" style="left:794px;top:2416px" width="22" height="34" viewBox="0 0 22 34"><defs><radialGradient id="bulb" cx="0.45" cy="0.4" r="0.6"><stop offset="0" stop-color="#fffbe0"/><stop offset="1" stop-color="#f2d98a"/></radialGradient></defs><path d="M11 1C5.5 1 2 5 2 9.5c0 3.5 2.2 5.5 3.5 7.5 0.8 1.3 1 2.8 1 4.5h9c0-1.7 0.2-3.2 1-4.5C17.8 15 20 13 20 9.5 20 5 16.5 1 11 1Z" fill="url(#bulb)"/><rect x="6.5" y="22" width="9" height="7" rx="1" fill="#b9b9b9"/><rect x="8" y="29" width="6" height="3" rx="1" fill="#8a8a8a"/></svg><svg class="q" style="left:1044px;top:2426px" width="20" height="14" viewBox="0 0 20 14"><path d="M1 1.5l6 5-6 5" fill="none" stroke="#98be65" stroke-width="1.6"/><path d="M9 12.5h10" stroke="#98be65" stroke-width="1.6"/></svg><svg class="q" style="left:1104px;top:2422px" width="21" height="21" viewBox="0 0 21 21"><path d="M19.5 1.5C14 1.5 10 4.5 7.5 9l-2.5 0.5-3 3 3.5 0.5 2.5 2.5 0.5 3.5 3-3 0.5-2.5C16.5 11 19.5 7 19.5 1.5Z" fill="none" stroke="#98be65" stroke-width="1.5" stroke-linejoin="round"/><circle cx="13.5" cy="7.5" r="1.6" fill="none" stroke="#98be65" stroke-width="1.3"/><path d="M4.5 14.5L1.5 19.5 6.5 16.5" fill="none" stroke="#98be65" stroke-width="1.4"/></svg><svg class="q" style="left:1384px;top:2422px" width="21" height="22" viewBox="0 0 21 22"><circle cx="4" cy="4" r="2.3" fill="none" stroke="#98be65" stroke-width="1.5"/><circle cx="16" cy="18" r="2.3" fill="none" stroke="#98be65" stroke-width="1.5"/><path d="M4 6.5v5c0 3 1.5 5 5 5h2" fill="none" stroke="#98be65" stroke-width="1.6"/><path d="M9 14l2.8 2.5L9 19" fill="none" stroke="#98be65" stroke-width="1.6"/><path d="M16 15.5v-5c0-3-1.5-5-5-5H9" fill="none" stroke="#98be65" stroke-width="1.6"/><path d="M11 3L8.2 5.5 11 8" fill="none" stroke="#98be65" stroke-width="1.6"/></svg><svg class="q" style="left:3183px;top:2420px" width="22" height="27" viewBox="0 0 22 27"><path d="M5.5 12V8a5.5 5.5 0 0 1 11 0v4" fill="none" stroke="#5f6369" stroke-width="2.6"/><rect x="1" y="11.5" width="20" height="15" rx="2.5" fill="#5f6369"/><circle cx="11" cy="18.5" r="1.9" fill="#1e2127"/></svg>
</div></div></div></body></html>
